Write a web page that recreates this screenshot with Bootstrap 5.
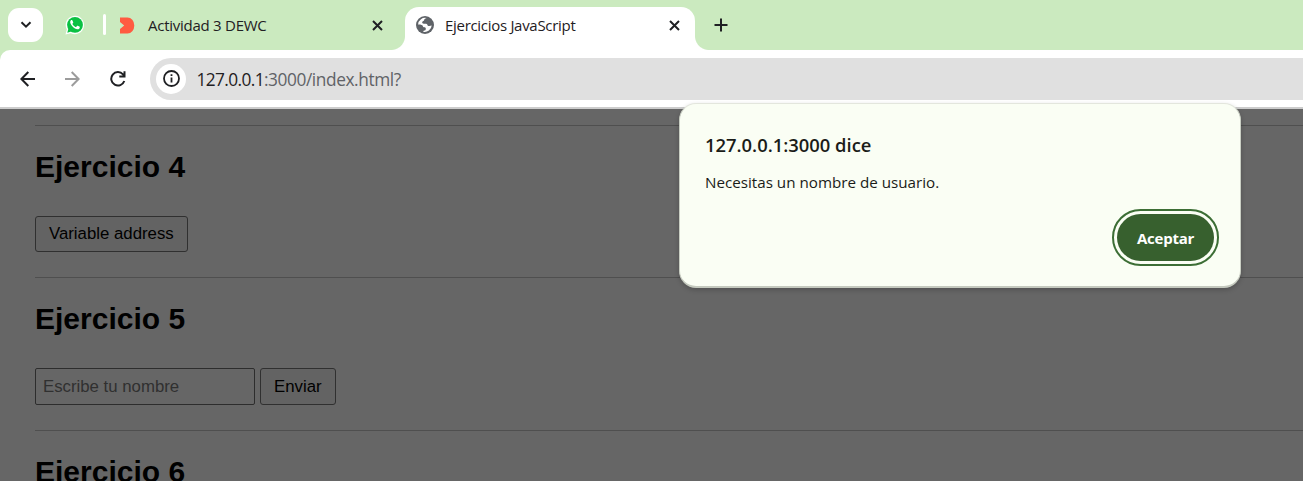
<!DOCTYPE html>
<html lang="es">
<head>
<meta charset="utf-8">
<meta name="viewport" content="width=device-width, initial-scale=1">
<title>Ejercicios JavaScript</title>
<link href="https://cdn.jsdelivr.net/npm/bootstrap@5.3.0/dist/css/bootstrap.min.css" rel="stylesheet">
<style>
  :root { --strip: #cbeabf; --ink: #1f2023; }
  body { height: 481px; background: var(--strip); color: var(--ink); font-family: "Open Sans", "Noto Sans", sans-serif; }
  svg { display: block; flex: none; }
  .tabstrip { height: 50px; flex: none; }
  .tab-search { width: 35px; height: 34px; margin: 8px 0 0 8px; border-radius: 11px; }
  .pinned { width: 20px; margin: 15px 0 0 22px; }
  .divider { width: 3px; height: 21px; margin: 14px 0 0 18px; border-radius: 2px; background: #fff; }
  .browser-tab { height: 43px; margin-top: 7px; padding-bottom: 7px; font-size: 15px; line-height: 20px; }
  .tab-idle { width: 299px; padding-left: 14px; padding-right: 22px; }
  .tab-idle .tab-name { margin-left: 13px; letter-spacing: -.26px; }
  .tab-active { width: 290px; background: #fff; border-radius: 14px 14px 0 0; padding-left: 11px; padding-right: 15px; }
  .tab-active .tab-name { margin-left: 11px; letter-spacing: -.3px; }
  .tab-active::before, .tab-active::after { content: ""; position: absolute; bottom: 0; width: 14px; height: 14px; }
  .tab-active::before { left: -14px; background: radial-gradient(circle at 0 0, transparent 13.5px, #fff 14.5px); }
  .tab-active::after { right: -14px; background: radial-gradient(circle at 100% 0, transparent 13.5px, #fff 14.5px); }
  .new-tab { margin: 18px 0 0 19px; }
  .toolbar { height: 59px; background: #fff; border-bottom: 2px solid #ccc; border-top-left-radius: 10px; padding-left: 20px; }
  .nav-icon { margin-left: 30px; }
  .omnibox { height: 42px; margin-left: 24px; background: #e0e0e0; border-radius: 21px 0 0 21px; padding-left: 6px; }
  .site-info { width: 30px; height: 30px; }
  .url { margin-left: 10.5px; padding-top: 2px; font-size: 17.3px; color: #606367; white-space: nowrap; letter-spacing: -.41px; }
  .url-host { color: var(--ink); letter-spacing: -.61px; }
  .page-area { background: #666; padding: 16px 0 0 35px; font-family: "Liberation Sans", Arial, sans-serif; color: #000; min-height: 0; }
  .exercise { border-top: 1px solid #4f4f4f; height: 152px; padding-top: 23px; }
  .exercise + .exercise { height: 153px; }
  .exercise h2 { font-size: 30px; line-height: 36px; font-weight: 700; margin: 0 0 31px; }
  .plain-btn { height: 36px; border: 1px solid #303030; border-radius: 3px; background: #636363; font-size: 16.8px; line-height: 1; padding: 0 13px; color: #000; }
  .plain-input { width: 220px; height: 37px; border: 1px solid #2d2d2d; border-radius: 2px; background: #666; font-size: 16.8px; line-height: 1; padding: 0 7px; }
  .plain-input::placeholder { color: #303030; opacity: 1; }
  .plain-input + .plain-btn { height: 37px; margin-left: 5px; padding-top: 1px; }
  .alert-box { position: absolute; left: 679px; top: 103px; width: 562px; height: 185px; background: #fafef4; border: 1px solid #c9cec3; border-top-color: #e3e6dd; border-bottom: 2px solid #c4c9be; border-radius: 17px; padding: 28px 26px 0 25px; box-shadow: 0 2px 5px rgba(0,0,0,.2); }
  .alert-title { font-size: 18.4px; line-height: 26px; font-weight: 600; color: #1a1c18; }
  .alert-text { font-size: 15.2px; line-height: 22px; margin-top: 13px; color: #1a1c18; }
  .accept { width: 97px; height: 47px; margin-top: 21px; padding: 1px 0 0; border: 0; border-radius: 24px; background: #37602e; color: #fff; font-size: 15px; font-weight: 700; letter-spacing: -.25px; outline: 2px solid #3c6e35; outline-offset: 3px; }
</style>
</head>
<body class="d-flex flex-column overflow-hidden position-relative">
<header class="tabstrip d-flex align-items-start">
  <button class="tab-search btn p-0 bg-white border-0 d-flex align-items-center justify-content-center" aria-label="Buscar pestañas">
    <svg width="12" height="8" viewBox="0 0 12 8" fill="none" stroke="#1f2023" stroke-width="2"><path d="M1.500 1.200 6 5.700l4.500-4.500"/></svg>
  </button>
  <div class="pinned">
    <svg width="20" height="20" viewBox="0 0 20 20"><path d="M.5 19.500 1.800 14.400A9.200 9.200 0 1 1 5.800 18.200Z" fill="#fff"/><circle cx="10" cy="9.800" r="7.900" fill="#0bc143"/><path d="M2.300 17.700 3.600 13l3.300 3.300Z" fill="#0bc143"/><path d="M7.300 5.300c-.4-.6-1-.5-1.400 0-1.100 1.200-.9 3 .6 5 1.600 2.200 3.500 3.600 5.600 4 1.300.2 2.500-.6 2.700-1.900.1-.4-.2-.6-.5-.8l-1.600-.8c-.4-.2-.6 0-.8.300l-.7.800c-.2.200-.5.200-.8 0-1.300-.6-2.200-1.500-2.900-2.700-.1-.2 0-.4.100-.6l.6-.8c.1-.2.100-.4 0-.6z" fill="#fff"/></svg>
  </div>
  <div class="divider"></div>
  <div class="browser-tab tab-idle d-flex align-items-center">
    <svg width="15" height="17" viewBox="0 0 15 17"><path d="M0 .5h7.500A6.800 8 0 0 1 7.500 16.500H0v-4.500L4.200 8.500 0 5Z" fill="#ff5b41"/></svg>
    <span class="tab-name">Actividad 3 DEWC</span>
    <svg class="ms-auto" width="11" height="11" viewBox="0 0 11 11" stroke="#1f2023" stroke-width="2"><path d="m1 1 9 9M10 1l-9 9"/></svg>
  </div>
  <div class="browser-tab tab-active d-flex align-items-center position-relative">
    <svg width="18" height="18" viewBox="0 0 18 18"><circle cx="9" cy="9" r="9" fill="#5f6368"/><path d="M10.800 2.100C9.500 2.300 8.300 3 8.100 4.200c-.1 1-1.600.7-1.900 1.700-.2 1 .6 1.700 1.600 1.800 1.500.1 3.600-.2 3.700 1.300 0 .9 1 1 1.800.9l2.400-.5A7 7 0 0 1 7.200 15.700c.1-.9.900-1 1.600-1.100 1-.2.800-1.200 1-1.900.1-.7-.6-1.400-1.300-1.400-1.100 0-1.500-.5-1.700-1.400C6.600 8.700 3.500 8.800 2.100 8.500A7 7 0 0 1 10.800 2.100Z" fill="#fff"/></svg>
    <span class="tab-name">Ejercicios JavaScript</span>
    <svg class="ms-auto" width="11" height="11" viewBox="0 0 11 11" stroke="#1f2023" stroke-width="2"><path d="m1 1 9 9M10 1l-9 9"/></svg>
  </div>
  <svg class="new-tab" width="14" height="14" viewBox="0 0 14 14" stroke="#1f2023" stroke-width="2"><path d="M7 .5v13M.5 7h13"/></svg>
</header>
<nav class="toolbar d-flex align-items-center flex-shrink-0">
  <svg width="15" height="16" viewBox="0 0 15 16" fill="none" stroke="#1f2023" stroke-width="2"><path d="M15 8H1.500M8.300 1 1.400 8l6.900 7"/></svg>
  <svg class="nav-icon" width="15" height="16" viewBox="0 0 15 16" fill="none" stroke="#9c9c9c" stroke-width="2"><path d="M0 8h13.500M6.700 1l6.900 7-6.900 7"/></svg>
  <svg class="nav-icon" width="16" height="16" viewBox="0 0 16 16" fill="none" stroke="#1f2023" stroke-width="2"><path d="M14.300 10A6.700 6.700 0 1 1 13 3.400l1.500 1.700M14.500.3V5.500H9.300"/></svg>
  <div class="omnibox d-flex align-items-center flex-grow-1">
    <span class="site-info rounded-circle bg-white d-flex align-items-center justify-content-center">
      <svg width="17" height="17" viewBox="0 0 17 17" fill="none" stroke="#1f2023" stroke-width="1.800"><circle cx="8.500" cy="8.500" r="7.500"/><path d="M8.500 7.500v5M8.500 4.300v1.800"/></svg>
    </span>
    <span class="url"><span class="url-host">127.0.0.1</span>:3000/index.html?</span>
  </div>
</nav>
<main class="page-area flex-grow-1 overflow-hidden">
  <section class="exercise">
    <h2>Ejercicio 4</h2>
    <button class="plain-btn">Variable address</button>
  </section>
  <section class="exercise">
    <h2>Ejercicio 5</h2>
    <form class="d-flex">
      <input class="plain-input" placeholder="Escribe tu nombre">
      <button type="button" class="plain-btn">Enviar</button>
    </form>
  </section>
  <section class="exercise">
    <h2>Ejercicio 6</h2>
  </section>
</main>
<div class="alert-box" role="alertdialog">
  <div class="alert-title">127.0.0.1:3000 dice</div>
  <div class="alert-text">Necesitas un nombre de usuario.</div>
  <div class="d-flex justify-content-end"><button class="accept">Aceptar</button></div>
</div>
<script src="https://cdn.jsdelivr.net/npm/bootstrap@5.3.0/dist/js/bootstrap.bundle.min.js"></script>
</body>
</html>
